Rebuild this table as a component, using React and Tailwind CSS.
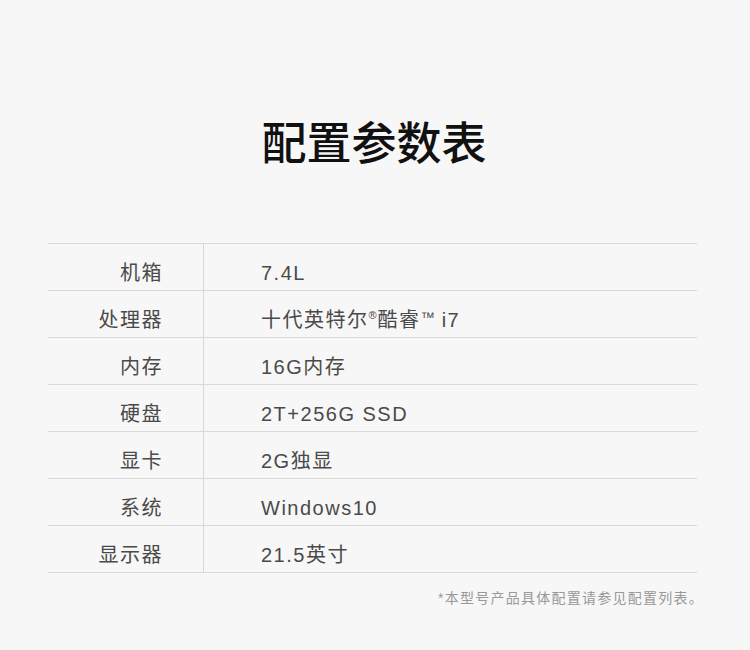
import React from "react";

const cpu = (
  <span>
    十代英特尔
    <span className="relative top-[-8px] text-[11px] tracking-[0px] mr-[1px]">®</span>
    酷睿
    <span className="relative top-[-5px] text-[14px] tracking-[0px]">™</span> i7
  </span>
);

const rows = [
  ["机箱", "7.4L"],
  ["处理器", cpu],
  ["内存", "16G内存"],
  ["硬盘", "2T+256G SSD"],
  ["显卡", "2G独显"],
  ["系统", "Windows10"],
  ["显示器", "21.5英寸"],
];

export default function App() {
  return (
    <div
      className="w-[750px] h-[650px] bg-[#f7f7f7] flex flex-col items-center"
      style={{ fontFamily: '"Liberation Sans", "Noto Sans CJK SC", sans-serif' }}
    >
      <h1
        className="mt-[110px] h-[62px] leading-[62px] text-[45px] font-medium text-[#111] ml-[-2px]"
        style={{ fontFamily: '"Noto Sans CJK SC", sans-serif' }}
      >
        配置参数表
      </h1>
      <div className="mt-[71px] w-[649px] ml-[-5px] border-t border-[#d9d9d9]">
        {rows.map(([k, v]) => (
          <div
            key={k}
            className="flex h-[47px] border-b border-[#d9d9d9] text-[20px] text-[#4a4a4a] tracking-[1.5px]"
          >
            <div className="w-[156px] pr-[40px] pt-[11px] flex items-center justify-end border-r border-[#d9d9d9]">
              <span>{k}</span>
            </div>
            <div className="pl-[57px] pt-[11px] flex items-center">
              <span>{v}</span>
            </div>
          </div>
        ))}
      </div>
      <div className="w-[649px] ml-[9px] mt-[15px] text-right text-[14px] text-[#999] tracking-[1.25px]">
        *本型号产品具体配置请参见配置列表。
      </div>
    </div>
  );
}
